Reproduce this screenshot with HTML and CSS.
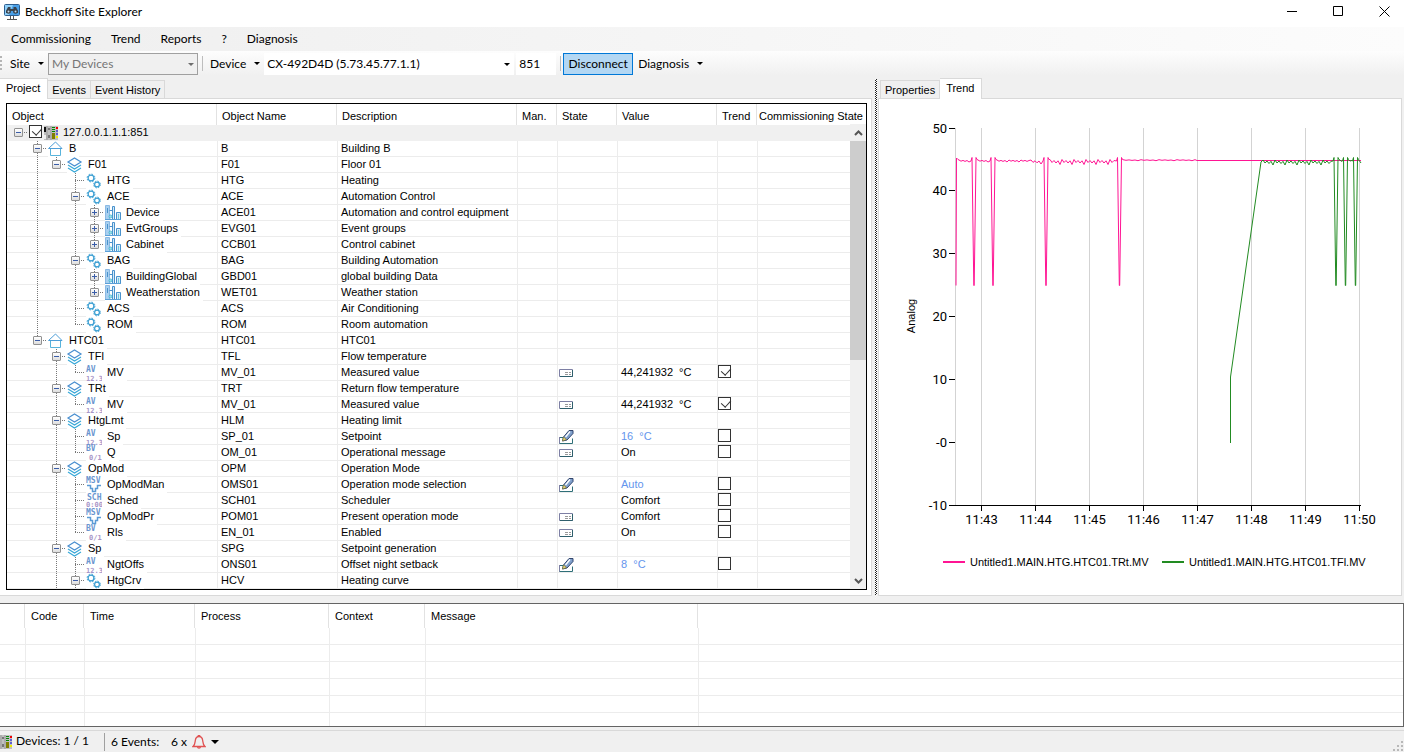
FILE: index.html
```html
<!DOCTYPE html>
<html lang="en">
<head>
<meta charset="utf-8">
<title>Beckhoff Site Explorer</title>
<link rel="stylesheet" href="styles.css">
</head>
<body>
<svg class="sprite" aria-hidden="true">
  <symbol id="i-device" viewBox="0 0 16 16">
    <rect x="1" y="1" width="14" height="14" fill="#c0c0c0"/>
    <path d="M1 2h2v5H1z" fill="#111"/><path d="M5 3h2v2H5zM5 10h2v3H5z" fill="#777"/>
    <path d="M1 10h2v4H1z" fill="#eee"/><path d="M4 1v14M8 1v14" stroke="#999"/>
    <path d="M9 2.500h3M9 4.500h3M9 6.500h3" stroke="#080" stroke-width="1"/><path d="M9 8h3v6H9z" fill="#808000"/>
    <path d="M13 2h2v2h-2z" fill="#e00"/><path d="M13 6h2M13 9h2" stroke="#00d" stroke-width="1"/><path d="M13 12h2" stroke="#ee0" stroke-width="2"/>
  </symbol>
  <symbol id="i-house" viewBox="0 0 16 16">
    <path d="M2.500 7.500v7h10v-7" fill="#fff" stroke="#58b4dc"/>
    <path d="M.500 7.500 7.500 1l6.500 6.500z" fill="#fff" stroke="#4f9fd8"/>
  </symbol>
  <symbol id="i-layers" viewBox="0 0 16 16">
    <path d="M1 11l6.500 4 6.500-4M1 8l6.500 4L14 8" fill="none" stroke="#38a8d8" stroke-width="1.200"/>
    <path d="M1 5l6.500-4L14 5 7.500 9z" fill="#fff" stroke="#4a8fd0" stroke-width="1.200"/>
  </symbol>
  <symbol id="i-gears" viewBox="0 0 16 16">
    <circle cx="5" cy="5" r="3.900" fill="none" stroke="#3fa2d4" stroke-dasharray="1.700 1.360"/>
    <circle cx="5" cy="5" r="2.900" fill="#fff" stroke="#3a9ed2" stroke-width="1.200"/>
    <circle cx="11" cy="11.500" r="3.400" fill="none" stroke="#3fa2d4" stroke-dasharray="1.500 1.170"/>
    <circle cx="11" cy="11.500" r="2.400" fill="#fff" stroke="#3a9ed2" stroke-width="1.200"/>
  </symbol>
  <symbol id="i-plant" viewBox="0 0 16 16">
    <path d="M.500.500h4v14h-4z" fill="#a9d0f0" stroke="#8bb9e4"/>
    <path d="M7.500 14.500V1.500h2v13M11.500 7.500h4v7h-4z" fill="#d6ecf9" stroke="#4a92cc"/>
    <path d="M4.500 5.500h3M2.500 3v5" stroke="#4a92cc" fill="none"/>
    <circle cx="5.500" cy="11.500" r="1.500" fill="#9ee2e8" stroke="#3fb0d0" stroke-width=".800"/>
    <path d="M13 9h1v5h-1z" fill="#6fc8e0"/><path d="M0 14.500h16" stroke="#5aa0d8"/>
  </symbol>
  <symbol id="i-av" viewBox="0 0 16 16">
    <text x="0" y="7" class="glyph-top">AV</text><text x="0" y="16" class="glyph-low">12.3</text>
  </symbol>
  <symbol id="i-bv" viewBox="0 0 16 16">
    <text x="0" y="6" class="glyph-top">BV</text><text x="3" y="15" class="glyph-low">0/1</text>
  </symbol>
  <symbol id="i-msv" viewBox="0 0 16 16">
    <text x="0" y="6" class="glyph-top">MSV</text>
    <path d="M1 8.500h3.500v3h2v3h3v-3h2v-3H15" fill="none" stroke="#5b9bd5" stroke-width="1.500"/>
  </symbol>
  <symbol id="i-sch" viewBox="0 0 16 16">
    <text x="1" y="7" class="glyph-top">SCH</text><text x="0" y="14" class="glyph-low">0:00</text>
  </symbol>
  <symbol id="i-card" viewBox="0 0 16 16">
    <path d="M1.500 4.500h13v7h-13z" fill="#fff" stroke="#7d7fa4"/><path d="M2 11.500h12.500V5" fill="none" stroke="#2f5f6c"/>
    <path d="M7 7.500h3m1 0h2M7 9.500h3m1 0h2" stroke="#999"/>
  </symbol>
  <symbol id="i-edit" viewBox="0 0 16 16">
    <path d="M5 8.500H1.500v6h13v-5" fill="#fff" stroke="#2f6f78"/><path d="M1.500 8v6.500" stroke="#7d7fa4"/>
    <path d="M4.500 12l1-4 5.500-6.500h4v3L9 11z" fill="#7fa0cc" stroke="#33466e"/>
    <path d="M4.500 12l1-4 3 2.500z" fill="#f2e47c" stroke="#77703a" stroke-width=".700"/>
    <path d="M7.500 8 12 2.500" stroke="#fff" stroke-width="1.300"/>
  </symbol>
</svg>

<header class="titlebar">
  <svg class="app-icon" viewBox="0 0 16 16" aria-hidden="true">
    <rect x=".5" y=".5" width="15" height="11" rx="1" fill="#8fd0fa" stroke="#2d5d8e"/>
    <path d="M9 1h6v10H5z" fill="#4aa0e8"/>
    <path d="M4 3h2.500v2h3V3H12l2 4v2H9.500V7h-3v2H2V7z" fill="#3a424b"/>
    <circle cx="4.500" cy="7.500" r="2.200" fill="#3a424b"/><circle cx="11.500" cy="7.500" r="2.200" fill="#3a424b"/>
    <circle cx="4.500" cy="7.500" r="1" fill="#c9dcec"/><circle cx="11.500" cy="7.500" r="1" fill="#c9dcec"/>
    <path d="M6.500 12v3M9.500 12v3M3 15.500h10" stroke="#555"/>
  </svg>
  <h1>Beckhoff Site Explorer</h1>
  <button class="winbtn" aria-label="Minimize"><svg viewBox="0 0 11 11"><path d="M0 5.500h10"/></svg></button>
  <button class="winbtn" aria-label="Maximize"><svg viewBox="0 0 11 11"><path d="M.5.5h9v9h-9z"/></svg></button>
  <button class="winbtn" aria-label="Close"><svg viewBox="0 0 11 11"><path d="M.5.5l10 10M10.500.5l-10 10"/></svg></button>
</header>

<nav class="menubar">
  <button>Commissioning</button><button>Trend</button><button>Reports</button><button>?</button><button>Diagnosis</button>
</nav>

<div class="toolbar">
  <span class="grip"></span>
  <button class="drop" id="site">Site</button>
  <span class="combo combo-site"><select aria-labelledby="site" disabled><option>My Devices</option></select></span>
  <span class="sep"></span>
  <button class="drop" id="device">Device</button>
  <span class="combo combo-device"><select aria-labelledby="device"><option>CX-492D4D (5.73.45.77.1.1)</option></select></span>
  <input class="port" type="text" value="851" aria-label="Port">
  <span class="sep"></span>
  <button class="connect">Disconnect</button>
  <button class="drop">Diagnosis</button>
</div>

<main class="workspace">
  <section class="pane">
    <div class="tabs" role="tablist">
      <button role="tab" class="active" aria-selected="true">Project</button><button role="tab">Events</button><button role="tab">Event History</button>
    </div>
    <div class="panel project">
      <div class="grid">
        <table class="tree">
          <colgroup><col class="c-object"><col class="c-name"><col class="c-desc"><col class="c-man"><col class="c-state"><col class="c-value"><col class="c-trend"><col></colgroup>
          <thead><tr><th>Object</th><th>Object Name</th><th>Description</th><th>Man.</th><th>State</th><th>Value</th><th>Trend</th><th>Commissioning State</th></tr></thead>
          <tbody id="rows"></tbody>
        </table>
        <div class="scrollbar">
          <button aria-label="Scroll up"><svg viewBox="0 0 9 6"><path d="M1 5l3.500-3.500L8 5"/></svg></button>
          <div class="thumb"></div>
          <button aria-label="Scroll down"><svg viewBox="0 0 9 6"><path d="M1 1l3.500 3.500L8 1"/></svg></button>
        </div>
      </div>
    </div>
  </section>
  <div class="splitter"></div>
  <section class="pane">
    <div class="tabs tabs-right" role="tablist">
      <button role="tab">Properties</button><button role="tab" class="active" aria-selected="true">Trend</button>
    </div>
    <div class="panel">
      <svg class="chart" id="chart" viewBox="0 0 522 496" role="img" aria-label="Trend chart"></svg>
    </div>
  </section>
</main>

<section class="log">
  <table>
    <colgroup><col class="l-mark"><col class="l-code"><col class="l-time"><col class="l-process"><col class="l-context"><col class="l-message"><col></colgroup>
    <thead><tr><th></th><th>Code</th><th>Time</th><th>Process</th><th>Context</th><th>Message</th><th></th></tr></thead>
    <tbody>
      <tr><td></td><td></td><td></td><td></td><td></td><td></td><td></td></tr>
      <tr><td></td><td></td><td></td><td></td><td></td><td></td><td></td></tr>
      <tr><td></td><td></td><td></td><td></td><td></td><td></td><td></td></tr>
      <tr><td></td><td></td><td></td><td></td><td></td><td></td><td></td></tr>
      <tr><td></td><td></td><td></td><td></td><td></td><td></td><td></td></tr>
      <tr class="partial"><td></td><td></td><td></td><td></td><td></td><td></td><td></td></tr>
    </tbody>
  </table>
</section>

<footer class="status">
  <svg class="status-icon" viewBox="3 0 13 16" aria-hidden="true"><use href="#i-device" width="16" height="16"/></svg>
  <span class="devices">Devices: 1 / 1</span>
  <span class="events">6 Events:</span>
  <button class="alarm">6 x
    <svg viewBox="0 0 14 14" aria-hidden="true"><path d="M1 11.500c2-1.500 2-3 2.300-6C3.600 3 5 1.500 7 1.500S10.400 3 10.700 5.500c.3 3 .3 4.500 2.300 6zM5.500 12c.3 1.600 2.700 1.600 3 0M6 1.300C6 .3 8 .3 8 1.300" fill="none" stroke="#e05252" stroke-width="1.300"/></svg>
  </button>
  <svg class="sizegrip" viewBox="0 0 11 11" aria-hidden="true"><path d="M8 0h2v2H8zM8 4h2v2H8zM8 8h2v2H8zM4 4h2v2H4zM4 8h2v2H4zM0 8h2v2H0z" fill="#b8b8b8"/></svg>
</footer>
<script src="app.js"></script>
</body>
</html>
```

FILE: styles.css
```css
* { box-sizing: border-box; }

body {
  margin: 0;
  height: 100vh;
  display: flex;
  flex-direction: column;
  overflow: hidden;
  background: #f0f0f0;
  color: #000;
  font: 11px/16px "Liberation Sans", Arial, sans-serif;
}

button, input, select { font: inherit; color: inherit; border: 0; margin: 0; padding: 0; background: none; border-radius: 0; }
.sprite { display: none; }
symbol { overflow: visible; }

/* Title bar */
.titlebar, .menubar, .toolbar, .status { font-family: Lato, "Open Sans", sans-serif; font-size: 12px; flex: none; display: flex; align-items: center; }
.titlebar { height: 27px; background: #fff; padding-left: 4px; padding-bottom: 4px; }
.app-icon { width: 16px; height: 16px; margin-right: 5px; }
.titlebar h1 { font: inherit; margin: 0; flex: 1; }
.winbtn { width: 46px; height: 20px; display: flex; align-items: center; padding-left: 21px; }
.winbtn svg { width: 11px; height: 11px; fill: none; stroke: #000; }

.menubar { height: 24px; padding-left: 3px; background: linear-gradient(to right, #efefef, #fcfcfc); }
.menubar button { padding: 0 8px; margin-right: 4px; }

/* Tool bar */
.toolbar { height: 25px; background: linear-gradient(#fdfdfd, #f0f0f0); }
.grip { width: 2px; height: 15px; margin-right: 8px; background: repeating-linear-gradient(#b5b5b5 0 2px, transparent 2px 4px); }
.drop { display: flex; align-items: center; gap: 8px; margin-right: 4px; }
.drop::after, .combo::after, .alarm::after { content: ""; border: 3px solid transparent; border-top-color: #000; border-bottom: 0; }
.combo { position: relative; display: block; height: 22px; }
.combo::after { position: absolute; right: 4px; top: 10px; pointer-events: none; }
.combo select { appearance: none; width: 100%; height: 22px; padding-left: 3px; background: #fff; opacity: 1; }
.combo-site { width: 150px; }
.combo-site::after { border-top-color: #6d6d6d; }
.combo-site select { border: 1px solid #a0a0a0; background: #f0f0f0; color: #757575; }
.combo-device { width: 250px; margin-right: 2px; }
.port { width: 40px; height: 22px; background: #fff; padding-left: 3px; }
.sep { width: 1px; height: 15px; background: #bdbdbd; margin: 0 7px 0 4px; }
.port + .sep { margin-right: 2px; }
.connect { width: 70px; height: 22px; background: #b3d7f3; border: 1px solid #0078d7; margin-right: 5px; }

/* Workspace */
.workspace { flex: 1; min-height: 0; display: grid; grid-template-columns: minmax(0, 872fr) 6px minmax(0, 526fr); padding-top: 2px; }
.pane { display: flex; flex-direction: column; min-width: 0; min-height: 0; }
.pane:last-child { padding-right: 2px; }
.tabs { display: flex; align-items: flex-end; height: 20px; flex: none; }
.tabs-right { padding-left: 2px; }
.tabs button { height: 18px; padding: 0 4px; line-height: 18px; border: 1px solid #d9d9d9; border-bottom: 0; border-left: 0; }
.tabs-right button:first-child { border-left: 1px solid #d9d9d9; }
.tabs .active { position: relative; height: 21px; margin-bottom: -1px; background: #fff; padding: 0 7px 2px 6px; }
.panel { flex: 1; min-height: 0; background: #fff; border: 1px solid #d9d9d9; }
.project { border-left: 0; padding: 4px 4px 5px 6px; }
.splitter { width: 2px; margin: 1px 0 1px 3px; background: conic-gradient(#222 25%, #fff 0 50%, #222 0 75%, #fff 0) 0 0 / 2px 2px; }

/* Object grid */
.grid { height: 100%; display: flex; border: 1px solid #000; overflow: hidden; }
table { border-collapse: separate; border-spacing: 0; table-layout: fixed; width: 100%; }
th { font-weight: normal; text-align: left; white-space: nowrap; padding: 2px 0 0 5px; border-right: 1px solid #e2e2e2; }
th:last-child { border-right: 0; padding-left: 2px; }
.tree { flex: 1; min-width: 0; align-self: flex-start; }
.tree th { height: 21px; }
.tree td { height: 16px; line-height: 15px; padding: 0 0 0 3px; border-left: 1px solid #ececec; white-space: nowrap; vertical-align: top; background: linear-gradient(#ececec, #ececec) 0 100% / 100% 1px no-repeat; }
.tree td:first-child { padding-left: 2px; border-left: 0; }
.tree tbody tr:first-child td { background: #f0f0f0; border-left-color: #f0f0f0; }
.tree .mark { padding-left: 0; }
.c-object { width: 210px; }
.c-name { width: 120px; }
.c-desc { width: 180px; }
.c-man, .c-trend { width: 40px; }
.c-state { width: 60px; }
.c-value { width: 100px; }
.setpoint { color: #6495ed; }

.node { display: flex; height: 16px; }
.guide { width: 19px; height: 16px; flex: none; position: relative; --v: repeating-linear-gradient(#777 0 1px, transparent 1px 2px); --h: repeating-linear-gradient(to right, #777 0 1px, transparent 1px 2px); background-repeat: no-repeat; }
.through { background-image: var(--v), var(--h); background-size: 1px 16px, 10px 1px; background-position: 9px 0, 9px 7px; }
.pass { background-image: var(--v); background-size: 1px 16px; background-position: 9px 0; }
.end { background-image: var(--v), var(--h); background-size: 1px 8px, 10px 1px; background-position: 9px 0, 9px 7px; }
.root { background-image: var(--h); background-size: 10px 1px; background-position: 9px 7px; }
.toggle { position: absolute; left: 5px; top: 3px; width: 9px; height: 9px; border: 1px solid #919191; border-radius: 1px; background: linear-gradient(#3a5da8, #3a5da8) 1px 3px / 5px 1px no-repeat, linear-gradient(#fff, #ddd); }
.toggle.closed { background: linear-gradient(#3a5da8, #3a5da8) 1px 3px / 5px 1px no-repeat, linear-gradient(#3a5da8, #3a5da8) 3px 1px / 1px 5px no-repeat, linear-gradient(#fff, #ddd); }
.icon { width: 16px; height: 16px; flex: none; margin-left: 1px; overflow: visible; background: #fff; }
.label { height: 16px; padding: 0 3px 0 5px; background: #fff; }
.tree tr:first-child .icon, .tree tr:first-child .label { background: none; }
.tree tr:first-child .icon { margin-left: 0; }
.tree tr:first-child .label { padding-left: 4px; }
.mark svg { width: 16px; height: 16px; display: block; }
.glyph-top { font: bold 8px "DejaVu Sans Mono", monospace; fill: #6b96cf; }
.glyph-low { font: bold 7px "DejaVu Sans Mono", monospace; fill: #a996c8; }

input[type="checkbox"] { appearance: none; display: block; flex: none; width: 13px; height: 13px; border: 1px solid #333; background: #fff; position: relative; }
.node input { margin: 0 1px; }
input[type="checkbox"]:checked::after { content: ""; position: absolute; left: 4px; top: 0; width: 5px; height: 8px; border: solid #333; border-width: 0 1px 1px 0; transform: rotate(42deg); }

.scrollbar { width: 16px; margin-top: 20px; flex: none; display: flex; flex-direction: column; background: #f0f0f0; }
.scrollbar button { height: 17px; display: grid; place-items: center; flex: none; }
.scrollbar svg { width: 9px; height: 6px; fill: none; stroke: #555; stroke-width: 2; }
.thumb { height: 219px; background: #cdcdcd; }
.scrollbar .thumb + button { margin-top: auto; }

/* Chart */
.chart { display: block; width: 100%; height: 100%; font-size: 13px; }
.chart .scale { font-family: Roboto, sans-serif; }
.chart .rule { stroke: #d3d3d3; }
.chart .axis { stroke: #000; }
.chart .trt { fill: none; stroke: #ff1493; }
.chart .tfl { fill: none; stroke: #228b22; }
.chart .key { stroke-width: 2; }
.chart .small { font-size: 11px; }

/* Message log */
.log { flex: none; margin-top: 7px; background: #fff; border: 1px solid #646464; border-left: 0; }
.log th { height: 24px; padding: 0 0 0 6px; }
.log td { height: 17px; padding: 0; border-left: 1px solid #ececec; border-bottom: 1px solid #ececec; }
.log td:first-child { border-left: 0; }
.log .partial td { height: 13px; border-bottom: 0; }
.l-mark { width: 25px; }
.l-code { width: 59px; }
.l-time { width: 111px; }
.l-process { width: 134px; }
.l-context { width: 96px; }
.l-message { width: 273px; }

/* Status bar */
.status { height: 22px; margin-top: 3px; border-top: 1px solid #d9d9d9; position: relative; }
.status-icon { width: 13px; height: 16px; margin-right: 3px; }
.devices { width: 89px; height: 18px; border-right: 1px solid #a0a0a0; margin-right: 6px; }
.events { width: 60px; }
.alarm { display: flex; align-items: center; gap: 5px; }
.alarm svg { width: 14px; height: 14px; }
.alarm::after { border-width: 4px 4px 0; }
.sizegrip { width: 11px; height: 11px; position: absolute; right: 0; bottom: 0; }
```

FILE: app.js
```js
// level, icon, label, toggle (-: open, +: closed), object name, description, state icon, value, trend (0/1)
const rows = [
  [0, 'device', '127.0.0.1.1.1:851', '-', '', ''],
  [1, 'house', 'B', '-', 'B', 'Building B'],
  [2, 'layers', 'F01', '-', 'F01', 'Floor 01'],
  [3, 'gears', 'HTG', '', 'HTG', 'Heating'],
  [3, 'gears', 'ACE', '-', 'ACE', 'Automation Control'],
  [4, 'plant', 'Device', '+', 'ACE01', 'Automation and control equipment'],
  [4, 'plant', 'EvtGroups', '+', 'EVG01', 'Event groups'],
  [4, 'plant', 'Cabinet', '+', 'CCB01', 'Control cabinet'],
  [3, 'gears', 'BAG', '-', 'BAG', 'Building Automation'],
  [4, 'plant', 'BuildingGlobal', '+', 'GBD01', 'global building Data'],
  [4, 'plant', 'Weatherstation', '+', 'WET01', 'Weather station'],
  [3, 'gears', 'ACS', '', 'ACS', 'Air Conditioning'],
  [3, 'gears', 'ROM', '', 'ROM', 'Room automation'],
  [1, 'house', 'HTC01', '-', 'HTC01', 'HTC01'],
  [2, 'layers', 'TFl', '-', 'TFL', 'Flow temperature'],
  [3, 'av', 'MV', '', 'MV_01', 'Measured value', 'card', '44,241932 \u00a0°C', 1],
  [2, 'layers', 'TRt', '-', 'TRT', 'Return flow temperature'],
  [3, 'av', 'MV', '', 'MV_01', 'Measured value', 'card', '44,241932 \u00a0°C', 1],
  [2, 'layers', 'HtgLmt', '-', 'HLM', 'Heating limit'],
  [3, 'av', 'Sp', '', 'SP_01', 'Setpoint', 'edit', '16 \u00a0°C', 0],
  [3, 'bv', 'Q', '', 'OM_01', 'Operational message', 'card', 'On', 0],
  [2, 'layers', 'OpMod', '-', 'OPM', 'Operation Mode'],
  [3, 'msv', 'OpModMan', '', 'OMS01', 'Operation mode selection', 'edit', 'Auto', 0],
  [3, 'sch', 'Sched', '', 'SCH01', 'Scheduler', '', 'Comfort', 0],
  [3, 'msv', 'OpModPr', '', 'POM01', 'Present operation mode', 'card', 'Comfort', 0],
  [3, 'bv', 'Rls', '', 'EN_01', 'Enabled', 'card', 'On', 0],
  [2, 'layers', 'Sp', '-', 'SPG', 'Setpoint generation'],
  [3, 'av', 'NgtOffs', '', 'ONS01', 'Offset night setback', 'edit', '8 \u00a0°C', 0],
  [3, 'gears', 'HtgCrv', '-', 'HCV', 'Heating curve']
];

// Levels whose branch carries on below the last visible row
const openBelow = [2, 3];

function continues(index, level) {
  for (let i = index + 1; i < rows.length; i++) {
    if (rows[i][0] < level) return false;
    if (rows[i][0] === level) return true;
  }
  return openBelow.includes(level);
}

function guides(index) {
  const [level, , , toggle] = rows[index];
  let html = '';
  for (let l = 0; l < level; l++) {
    html += `<span class="guide ${l > 0 && continues(index, l) ? 'pass' : ''}"></span>`;
  }
  const kind = level === 0 ? 'root' : continues(index, level) ? 'through' : 'end';
  const box = toggle ? `<button class="toggle ${toggle === '+' ? 'closed' : ''}" aria-label="${toggle === '+' ? 'Expand' : 'Collapse'}"></button>` : '';
  return html + `<span class="guide ${kind}">${box}</span>`;
}

document.getElementById('rows').innerHTML = rows.map((row, i) => {
  const [level, icon, label, , name, desc, state, value, trend] = row;
  const check = level === 0 ? '<input type="checkbox" checked aria-label="Select device">' : '';
  return `<tr>
    <td><div class="node">${guides(i)}${check}<svg class="icon"><use href="#i-${icon}"/></svg><span class="label">${label}</span></div></td>
    <td>${name}</td><td>${desc}</td><td></td>
    <td class="mark">${state ? `<svg><use href="#i-${state}"/></svg>` : ''}</td>
    <td class="${state === 'edit' ? 'setpoint' : ''}">${value || ''}</td>
    <td class="mark">${trend === undefined ? '' : `<input type="checkbox" aria-label="Trend ${name}"${trend ? ' checked' : ''}>`}</td>
    <td></td></tr>`;
}).join('');

// Chart scales: 54 units per minute, 10 degrees per 62.8 units
const px = minute => 102.5 + 54 * (minute - 43);
const py = value => Math.round(343.5 - 6.28 * value) - 0.5;

// Small oscillation between two positions
function ripple(from, to, mid, amp, step) {
  const shape = [1, -0.2, 0.6, -0.4, 0.5, -1];
  const points = [];
  for (let x = from, i = 0; x < to; x += step, i++) points.push([x, mid - amp * shape[i % 6]]);
  return points;
}
const dip = x => [[x - 3, 62], [x - 2, 58.5], [x - 0.2, 186.5], [x + 0.2, 186.5], [x + 2, 58.5], [x + 3, 60.5]];
const line = points => points.map(p => p.map(n => n.toFixed(1)).join(',')).join(' ');

const trt = [[77, 186.5], [77.5, 59], [79, 60.5],
  ...ripple(80, 91, 62, 1, 2), ...dip(95),
  ...ripple(99, 110, 62, 1, 2), ...dip(114),
  ...ripple(118, 152, 62, 1, 2), ...ripple(152, 163, 63, 2, 2), ...dip(167),
  ...ripple(171, 236, 63, 2.5, 2), ...dip(240.5),
  ...ripple(244, 318, 61.2, 0.5, 3), [318, 61.5], [482, 61.5]];
const tfl = [[351.5, 344], [351.5, 278], [382, 63],
  ...ripple(384, 453, 63.5, 2.5, 2), ...dip(457), ...ripple(461, 463, 62, 1, 1),
  ...dip(466.5), ...ripple(470, 473, 62, 1, 1), ...dip(476.5), [482, 64]];

let svg = '';
for (let m = 43; m <= 50; m++) {
  svg += `<path class="rule" d="M${px(m)} 29V406"/><path class="axis" d="M${px(m)} 406v6"/><text class="scale" x="${px(m)}" y="425" text-anchor="middle">11:${m}</text>`;
}
svg += '<path class="rule" d="M76.5 29V406"/><path class="axis" d="M70 406.5H482"/>';
for (let v = -10; v <= 50; v += 10) {
  const y = v === -10 ? 406.5 : py(v);
  svg += `<path class="axis" d="M70 ${y}h6"/><text class="scale" x="68" y="${y + 4}" text-anchor="end">${v === 0 ? '-0' : v}</text>`;
}
svg += `<text class="small" transform="translate(36 217) rotate(-90)" text-anchor="middle">Analog</text>
  <polyline class="trt" points="${line(trt)}"/><polyline class="tfl" points="${line(tfl)}"/>
  <path class="trt key" d="M64 463h22"/><text class="small" x="91" y="467">Untitled1.MAIN.HTG.HTC01.TRt.MV</text>
  <path class="tfl key" d="M283 463h22"/><text class="small" x="310" y="467">Untitled1.MAIN.HTG.HTC01.TFl.MV</text>`;
document.getElementById('chart').innerHTML = svg;
```
